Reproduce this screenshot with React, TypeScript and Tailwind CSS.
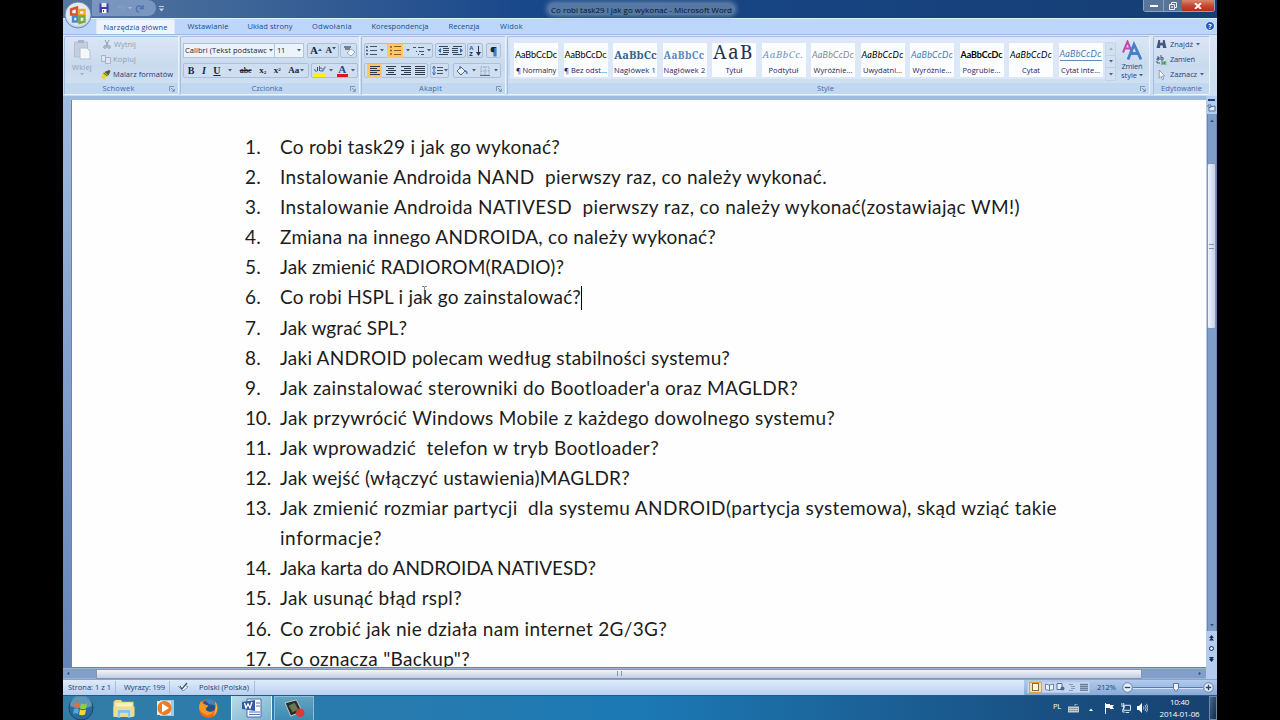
import { ReactNode, useLayoutEffect, useRef, useState } from "react";
import clsx from "clsx";

const questions: { text: string; width: number }[][] = [
  [{ text: "Co robi task29 i jak go wykonać?", width: 280 }],
  [{ text: "Instalowanie Androida NAND  pierwszy raz, co należy wykonać.", width: 547 }],
  [{ text: "Instalowanie Androida NATIVESD  pierwszy raz, co należy wykonać(zostawiając WM!)", width: 740 }],
  [{ text: "Zmiana na innego ANDROIDA, co należy wykonać?", width: 436 }],
  [{ text: "Jak zmienić RADIOROM(RADIO)?", width: 284 }],
  [{ text: "Co robi HSPL i jak go zainstalować?", width: 301 }],
  [{ text: "Jak wgrać SPL?", width: 127 }],
  [{ text: "Jaki ANDROID polecam według stabilności systemu?", width: 450 }],
  [{ text: "Jak zainstalować sterowniki do Bootloader'a oraz MAGLDR?", width: 518 }],
  [{ text: "Jak przywrócić Windows Mobile z każdego dowolnego systemu?", width: 555 }],
  [{ text: "Jak wprowadzić  telefon w tryb Bootloader?", width: 379 }],
  [{ text: "Jak wejść (włączyć ustawienia)MAGLDR?", width: 350 }],
  [
    { text: "Jak zmienić rozmiar partycji  dla systemu ANDROID(partycja systemowa), skąd wziąć takie", width: 777 },
    { text: "informacje?", width: 102 },
  ],
  [{ text: "Jaka karta do ANDROIDA NATIVESD?", width: 316 }],
  [{ text: "Jak usunąć błąd rspl?", width: 182 }],
  [{ text: "Co zrobić jak nie działa nam internet 2G/3G?", width: 387 }],
  [{ text: 'Co oznacza "Backup"?', width: 190 }],
];

const tabs = [
  { label: "Wstawianie", width: 41, box: "w-[62px]" },
  { label: "Układ strony", width: 45, box: "w-[62px]" },
  { label: "Odwołania", width: 40, box: "w-[62px]" },
  { label: "Korespondencja", width: 57, box: "w-[74px]" },
  { label: "Recenzja", width: 31, box: "w-[54px]" },
  { label: "Widok", width: 23, box: "w-[41px]" },
];

const calibri = "font-['Lato'] text-[9px]";
const cambria = "font-['Noto_Serif','DejaVu_Serif',serif]";

const wordStyles = [
  { sample: "AaBbCcDc", label: "¶ Normalny", sw: 42, lw: 40, cls: `${calibri} text-black` },
  { sample: "AaBbCcDc", label: "¶ Bez odst...", sw: 42, lw: 43, cls: `${calibri} text-black` },
  { sample: "AaBbCc", label: "Nagłówek 1", sw: 43, lw: 42, cls: `${cambria} font-bold text-[11px] text-[#35608f]` },
  { sample: "AaBbCc", label: "Nagłówek 2", sw: 41, lw: 42, cls: `${cambria} font-bold text-[10px] text-[#5787bd]` },
  { sample: "AaB", label: "Tytuł", sw: 41, lw: 17, cls: `${cambria} text-[19px] text-[#22344e]` },
  { sample: "AaBbCc.", label: "Podtytuł", sw: 41, lw: 30, cls: `${cambria} italic text-[9.5px] text-[#7394b9]` },
  { sample: "AaBbCcDc", label: "Wyróżnie...", sw: 42, lw: 39, cls: `${calibri} italic text-[#85888c]` },
  { sample: "AaBbCcDc", label: "Uwydatni...", sw: 42, lw: 39, cls: `${calibri} italic text-black` },
  { sample: "AaBbCcDc", label: "Wyróżnie...", sw: 42, lw: 39, cls: `${calibri} italic text-[#4878b4]` },
  { sample: "AaBbCcDc", label: "Pogrubie...", sw: 42, lw: 38, cls: `${calibri} font-bold text-black` },
  { sample: "AaBbCcDc", label: "Cytat", sw: 42, lw: 18, cls: `${calibri} italic text-black` },
  { sample: "AaBbCcDc", label: "Cytat inte...", sw: 42, lw: 39, cls: `${calibri} italic text-[#4878b4] border-b border-[#6688bb]` },
];

// Spreads the letters so that the text takes exactly `width` pixels
function Fit({ width, className, children }: { width: number; className?: string; children: string }) {
  const ref = useRef<HTMLSpanElement>(null);
  const [spacing, setSpacing] = useState(0);

  useLayoutEffect(() => {
    if (!ref.current) return;
    const natural = ref.current.getBoundingClientRect().width;
    setSpacing((width - natural) / children.length);
  }, [width, children]);

  return (
    <span ref={ref} className={clsx("inline-block whitespace-pre shrink-0", className)} style={{ letterSpacing: spacing }}>
      {children}
    </span>
  );
}

function Arrow({ className }: { className?: string }) {
  return (
    <svg viewBox="0 0 4 3" className={clsx("w-[4px] h-[3px] shrink-0", className ?? "text-[#47608a]")}>
      <path d="M0 0h4L2 2.6z" fill="currentColor" />
    </svg>
  );
}

function Launcher() {
  return (
    <svg viewBox="0 0 6 6" className="w-[6px] h-[6px] shrink-0" fill="none" stroke="#6b88b0">
      <path d="M.5 5V.5H5" strokeWidth=".8" />
      <path d="M2 2l3 3M5.300 2.800v2.500H2.800" strokeWidth=".9" />
    </svg>
  );
}

function Group({ title, width, className, launcher, children }: {
  title: string;
  width: number;
  className: string;
  launcher?: boolean;
  children: ReactNode;
}) {
  return (
    <section
      className={clsx(
        "flex h-[59px] shrink-0 flex-col rounded-[2px] border border-[#a3c0df] border-r-[#e9f3fd] border-b-[#e5f7fd] bg-linear-to-b from-[#dce6f4] via-[#c9daee] to-[#d3e3f5]",
        className,
      )}
    >
      <div className="h-[46px]">{children}</div>
      <div className="flex h-[11px] items-center bg-[#c1d8f0] px-[3px] text-[#3e6aaa]">
        <span className="flex flex-1 justify-center">
          <Fit width={width}>{title}</Fit>
        </span>
        {launcher && <Launcher />}
      </div>
    </section>
  );
}

function Bar({ className, children }: { className: string; children: ReactNode }) {
  return (
    <div className={clsx("flex h-[15px] items-center justify-around rounded-[2px] border border-[#a9c0dd] bg-[#cfdff1]", className)}>
      {children}
    </div>
  );
}

function Lines({ align }: { align: "left" | "center" | "right" | "full" }) {
  const d = {
    left: "M0 .5h10M0 2.500h7M0 4.500h10M0 6.500h7M0 8.500h10",
    center: "M0 .5h10M2 2.500h6M0 4.500h10M2 6.500h6M0 8.500h10",
    right: "M0 .5h10M3 2.500h7M0 4.500h10M3 6.500h7M0 8.500h10",
    full: "M0 .5h10M0 2.500h10M0 4.500h10M0 6.500h10M0 8.500h10",
  }[align];
  return (
    <svg viewBox="0 0 10 9" className="w-[10px] h-[9px]">
      <path d={d} stroke="#2f3b4d" strokeWidth="1.200" />
    </svg>
  );
}

function OfficeButton() {
  return (
    <svg viewBox="0 0 28 28" className="absolute left-[1px] top-[1px] z-10 h-[28px] w-[28px]">
      <defs>
        <radialGradient id="orb" cx=".5" cy=".45" r=".58">
          <stop offset="0" stopColor="#fbfcfd" />
          <stop offset=".75" stopColor="#dfe5ee" />
          <stop offset="1" stopColor="#9db1cb" />
        </radialGradient>
      </defs>
      <circle cx="14" cy="14" r="13" fill="url(#orb)" stroke="#5f7da8" strokeWidth=".8" />
      <g fill="none" strokeWidth="2.400">
        <path d="M7 8.500l6-2v7H7z" stroke="#d9532c" />
        <path d="M15 9h5.500v5H15z" stroke="#eda926" />
        <path d="M9 15.500h4.500v5H9z" stroke="#4c85d0" />
        <path d="M15.500 15.500h5v5l-5 1.500z" stroke="#78ac3f" />
      </g>
    </svg>
  );
}

function TitleBar() {
  return (
    <header className="relative flex h-[18px] items-start bg-linear-to-r from-[#55779f] via-[#18478a] via-40% to-[#153e73]">
      <div className="ml-[29px] flex h-[16px] w-[64px] items-center rounded-r-full bg-[#7896bf] pl-[7px]">
        <svg viewBox="0 0 10 10" className="h-[10px] w-[10px]">
          <path d="M.5.5h9v9h-9z" fill="#413ba5" />
          <path d="M2.500 0h5v4h-5z" fill="#e2e9f7" />
          <path d="M3 6h4.500v4H3z" fill="#fff" />
          <path d="M4 7h1v2H4z" fill="#413ba5" />
        </svg>
        <svg viewBox="0 0 10 10" className="ml-[8px] h-[8px] w-[9px]" fill="none" stroke="#839fc6" strokeWidth="1.500">
          <path d="M1 1v4h4M1.500 4.500C4 1 8 2 8 5s-2 4-3 4" />
        </svg>
        <Arrow className="ml-[2px] text-[#a4bad9]" />
        <svg viewBox="0 0 10 10" className="ml-[3px] h-[9px] w-[9px]" fill="none" stroke="#4a70b9" strokeWidth="1.500">
          <path d="M9 1v4H5M8.500 4.500C6 1 1.500 2 1.500 5s2 4 3 4" />
        </svg>
      </div>
      <svg viewBox="0 0 5 6" className="ml-[3px] mt-[6px] h-[6px] w-[5px]" fill="#bdd0ea">
        <path d="M0 0h5v1H0zM0 2.500h5L2.500 5.500z" />
      </svg>
      <div className="absolute left-[485px] top-[3px] flex h-[12px] items-center rounded-full bg-[#7f9bb9]/60 px-[3px] text-[8px] text-[#08121f] shadow-[0_0_4px_2px_rgba(127,155,185,0.6)]">
        <Fit width={181}>Co robi task29 i jak go wykonać - Microsoft Word</Fit>
      </div>
      <div className="absolute right-[2px] top-0 flex h-[12px] overflow-hidden rounded-b-[3px] border border-t-0 border-[#bccbdf]/70">
        <span className="flex w-[20px] items-end justify-center border-r border-[#8ba1bf] bg-[#577599] pb-[4px]">
          <i className="h-[2px] w-[8px] bg-white" />
        </span>
        <span className="flex w-[18px] items-center justify-center bg-[#577599]">
          <svg viewBox="0 0 8 8" className="h-[8px] w-[8px]" fill="none" stroke="#edf1f5">
            <path d="M2.500 2V.5h5v5H6M.5 2.500h5v5h-5zM2.500 4.500h1v1h-1z" />
          </svg>
        </span>
        <span className="flex w-[32px] items-center justify-center bg-linear-to-b from-[#dd8470] via-[#c54934] to-[#b72b1b]">
          <svg viewBox="0 0 8 6" className="h-[6px] w-[8px]" stroke="#fff" strokeWidth="1.800">
            <path d="M1 0l6 6M7 0L1 6" />
          </svg>
        </span>
      </div>
    </header>
  );
}

function TabRow() {
  return (
    <nav className="flex h-[16px] items-end border-t border-[#e1effd] bg-[#bdd7fb] pl-[33px] text-[#214a8c]">
      <span className="flex h-[15px] w-[79px] items-center justify-center rounded-t-[2px] border border-b-0 border-[#dce9f7] bg-[#edf4fd]">
        <Fit width={64}>Narzędzia główne</Fit>
      </span>
      <div className="ml-[2px] flex h-[15px] items-center">
        {tabs.map((tab) => (
          <span key={tab.label} className={clsx("flex justify-center", tab.box)}>
            <Fit width={tab.width}>{tab.label}</Fit>
          </span>
        ))}
      </div>
      <span className="mb-[3px] ml-auto mr-[2px] flex h-[10px] w-[10px] items-center justify-center rounded-full border border-[#dcecff] bg-[#285bb5] text-[7px] font-bold text-white">
        ?
      </span>
    </nav>
  );
}

function Clipboard() {
  return (
    <Group title="Schowek" width={32} className="w-[115px]" launcher>
      <div className="flex h-full text-[#929fb2]">
        <div className="flex w-[34px] flex-col items-center pt-[2px]">
          <svg viewBox="0 0 18 21" className="h-[21px] w-[18px]">
            <path d="M1.500 3h13v15h-13z" fill="#c3cfdf" stroke="#b1bfd2" />
            <path d="M5 1h6v3H5z" fill="#a7b4c7" />
            <path d="M7 9h7l3 3v8H7z" fill="#f4f7fa" stroke="#b1bfd2" />
          </svg>
          <Fit width={20} className="mt-[2px]">Wklej</Fit>
          <Arrow className="text-[#a5b1c2]" />
        </div>
        <div className="flex flex-col">
          <span className="flex h-[15px] items-center gap-[3px] pl-[4px]">
            <svg viewBox="0 0 8 9" className="h-[9px] w-[8px]" fill="none" stroke="#909eb4">
              <path d="M2 0l3 6M6 0L3 6" />
              <circle cx="2" cy="7" r="1.300" />
              <circle cx="6" cy="7" r="1.300" />
            </svg>
            <Fit width={22}>Wytnij</Fit>
          </span>
          <span className="flex h-[15px] items-center gap-[2px] pl-[2px]">
            <svg viewBox="0 0 10 9" className="h-[9px] w-[10px]" fill="#dde5ef" stroke="#9aa9bd" strokeWidth=".8">
              <path d="M.5.5h4v6h-4zM4.500 2.500h5v6h-5z" />
            </svg>
            <Fit width={23}>Kopiuj</Fit>
          </span>
          <span className="flex h-[15px] items-center gap-[2px] pl-[2px] text-[#1e3a72]">
            <svg viewBox="0 0 10 10" className="h-[10px] w-[10px]">
              <path d="M0 7l3-5 4 3-4 5z" fill="#f0d43c" />
              <path d="M3.500 2l4 3.500L9.500 1 8 0z" fill="#565b37" />
              <path d="M2.500 3l4 3" stroke="#5d8b32" strokeWidth="1.300" />
            </svg>
            <Fit width={60}>Malarz formatów</Fit>
          </span>
        </div>
      </div>
    </Group>
  );
}

function FontGroup() {
  return (
    <Group title="Czcionka" width={31} className="ml-[1px] w-[180px]" launcher>
      <div className="flex flex-col gap-[5px] pl-[2px] pt-[6px] text-[#1b2536]">
        <div className="flex h-[15px]">
          <span className="flex w-[92px] items-center justify-between border border-[#adc4de] bg-[#edf3fb] px-[1px] text-[7.500px]">
            <Fit width={82}>Calibri (Tekst podstawc</Fit>
            <Arrow />
          </span>
          <span className="flex w-[29px] items-center justify-between border border-l-0 border-[#adc4de] bg-[#edf3fb] px-[2px] text-[7.500px]">
            <Fit width={8}>11</Fit>
            <Arrow />
          </span>
          <Bar className="ml-[3px] w-[32px] font-['Liberation_Serif'] text-[11px] font-bold">
            <span className="flex">A<Arrow className="mt-[3px] rotate-180 text-[#304f91]" /></span>
            <span className="flex text-[9px]">A<Arrow className="mt-[2px] text-[#304f91]" /></span>
          </Bar>
          <Bar className="ml-[1px] w-[17px]">
            <svg viewBox="0 0 12 12" className="h-[12px] w-[12px]">
              <path d="M1 2h7M2 4h5" stroke="#586473" strokeWidth="1.300" />
              <path d="M4 8l4-4 4 3-4 4z" fill="#fff" stroke="#8595ac" strokeWidth=".8" />
            </svg>
          </Bar>
        </div>
        <div className="flex">
          <Bar className="w-[126px] font-['Liberation_Serif'] text-[9px] font-bold">
            <b className="text-[10px]">B</b>
            <i className="text-[10px]">I</i>
            <u className="text-[10px]">U</u>
            <Arrow />
            <s className="text-[8px]">abc</s>
            <span>x<sub className="text-[5px]">2</sub></span>
            <span>x<sup className="text-[5px]">2</sup></span>
            <span className="flex items-center gap-[1px]">Aa<Arrow /></span>
          </Bar>
          <Bar className="ml-[2px] w-[47px]">
            <svg viewBox="0 0 12 12" className="h-[12px] w-[12px]">
              <path d="M1 4a1.500 1.500 0 1 0 2.500 0V2v4M5.500 1v5M5.500 4a1.500 1.500 0 1 1 0 1" fill="none" stroke="#33445e" strokeWidth=".8" />
              <path d="M7 6l4-5 1 1-3 5z" fill="#7590b7" />
              <path d="M0 9h12v3H0z" fill="#f6f21c" />
            </svg>
            <Arrow />
            <span className="flex h-[13px] w-[11px] items-center justify-center border-b-[3px] border-[#da1420] font-['Liberation_Serif'] text-[11px] font-bold leading-none text-[#2b487f]">
              A
            </span>
            <Arrow />
          </Bar>
        </div>
      </div>
    </Group>
  );
}

function BulletIcon({ stroke }: { stroke: string }) {
  return (
    <svg viewBox="0 0 11 9" className="h-[9px] w-[11px]" stroke={stroke}>
      <path d="M0 1h2M0 4.500h2M0 8h2" strokeWidth="1.600" />
      <path d="M4 .5h7M4 4.500h7M4 8.500h7" strokeWidth="1" />
    </svg>
  );
}

function IndentIcon({ flip }: { flip?: boolean }) {
  return (
    <svg viewBox="0 0 11 9" className={clsx("h-[9px] w-[11px]", flip && "-scale-x-100")} stroke="#33435b">
      <path d="M1 .5h9M5 2.500h6M5 4.500h6M5 6.500h6M1 8.500h9" />
      <path d="M0 4.500L3 2v5z" fill="#3766b0" stroke="none" />
    </svg>
  );
}

function ParagraphGroup() {
  return (
    <Group title="Akapit" width={23} className="ml-[1px] w-[145px]" launcher>
      <div className="flex flex-col gap-[5px] pl-[2px] pt-[6px] text-[#1b2536]">
        <div className="flex">
          <Bar className="w-[69px]">
            <BulletIcon stroke="#42526a" />
            <Arrow />
            <span className="flex h-[14px] w-[16px] items-center justify-center bg-[#fcc866]">
              <BulletIcon stroke="#925c19" />
            </span>
            <Arrow />
            <svg viewBox="0 0 11 10" className="h-[10px] w-[11px]" stroke="#42526a">
              <path d="M0 1.500h3M5 1.500h6M3 5.500h1M6 5.500h5M5 8.500h1M8 8.500h3" />
            </svg>
            <Arrow />
          </Bar>
          <Bar className="ml-[2px] w-[31px]">
            <IndentIcon />
            <IndentIcon flip />
          </Bar>
          <Bar className="ml-[1px] w-[16px]">
            <span className="flex flex-col text-[6px] font-bold leading-[6px]">
              <span className="text-[#3a5a94]">A</span>
              <span>Z</span>
            </span>
            <svg viewBox="0 0 5 10" className="h-[10px] w-[5px]">
              <path d="M2.500 0v8" stroke="#25344a" />
              <path d="M0 6h5L2.500 10z" fill="#25344a" />
            </svg>
          </Bar>
          <Bar className="ml-[3px] w-[15px] text-[11px] font-bold">¶</Bar>
        </div>
        <div className="flex">
          <Bar className="w-[64px]">
            <span className="flex h-[14px] w-[15px] items-center justify-center bg-[#fcc866]">
              <Lines align="left" />
            </span>
            <Lines align="center" />
            <Lines align="right" />
            <Lines align="full" />
          </Bar>
          <Bar className="ml-[2px] w-[19px]">
            <svg viewBox="0 0 11 11" className="h-[11px] w-[11px]">
              <path d="M2 2v7M.5 3.500L2 1l1.500 2.500M.5 7.500L2 10l1.500-2.500" fill="none" stroke="#3e68b5" />
              <path d="M5 2.500h6M5 5.500h6M5 8.500h6" stroke="#44536a" />
            </svg>
            <Arrow />
          </Bar>
          <Bar className="ml-[4px] w-[48px]">
            <svg viewBox="0 0 12 11" className="h-[11px] w-[12px]">
              <path d="M1 6l4-4 4 4-4 4z" fill="#e9f0f8" stroke="#566983" />
              <path d="M4 4V1M9 6c2 0 2 2 2 3" fill="none" stroke="#4872bd" strokeWidth="1.300" />
            </svg>
            <Arrow />
            <svg viewBox="0 0 11 11" className="h-[10px] w-[10px]" fill="none" stroke="#7d90ac" strokeWidth=".8">
              <path d="M1 1h9v9H1zM5.500 1v9M1 5.500h9" strokeDasharray="1.500 1" />
              <path d="M0 10.500h11" stroke="#33435c" />
            </svg>
            <Arrow />
          </Bar>
        </div>
      </div>
    </Group>
  );
}

function StylesGroup() {
  return (
    <Group title="Style" width={17} className="ml-[1px] w-[643px]" launcher>
      <div className="flex h-full pl-[2px] pt-[2px]">
        <div className="flex h-[40px] gap-[5.500px] bg-[#dce7f7] pl-[4px] pt-[4px]">
          {wordStyles.map((style, index) => (
            <div key={index} className="flex h-[34px] w-[44px] flex-col bg-[#fcfdff]">
              <div className="flex h-[21px] w-[44px] items-center pl-[1px] pt-[2px]">
                <Fit
                  width={style.sw}
                  className={clsx(style.label === "Tytuł" ? "mt-[-6px] leading-[22px]" : "leading-[12px]", style.cls)}
                >
                  {style.sample}
                </Fit>
              </div>
              <div className="flex h-[12px] items-center justify-center text-[#28215c]">
                <Fit width={style.lw}>{style.label}</Fit>
              </div>
            </div>
          ))}
          <div className="ml-[-2px] flex h-[37px] w-[9px] flex-col gap-px">
            {[0, 1, 2].map((n) => (
              <span key={n} className="flex flex-1 items-center justify-center bg-[#d2e0f2] shadow-[0_0_0_0.500px_#b4c8e2]">
                <Arrow className={n === 0 ? "rotate-180 text-[#9dabc1]" : "text-[#46618f]"} />
              </span>
            ))}
          </div>
        </div>
        <div className="ml-[5px] flex w-[24px] flex-col items-center text-[#25477f]">
          <svg viewBox="0 0 20 20" className="mt-[1px] h-[21px] w-[20px]" fill="none">
            <path d="M1 12L5.500 1 10 12M3 8h5" stroke="#c04aae" strokeWidth="2" />
            <path d="M6 19l6-15 7 15M9 13h7" stroke="#477fc9" strokeWidth="2.800" />
          </svg>
          <Fit width={21} className="mt-[1px] leading-[9px]">Zmień</Fit>
          <span className="flex items-center gap-[2px] leading-[9px]">
            <Fit width={16}>style</Fit>
            <Arrow />
          </span>
        </div>
      </div>
    </Group>
  );
}

function EditingGroup() {
  return (
    <Group title="Edytowanie" width={41} className="ml-[3px] w-[57px]">
      <div className="flex flex-col pl-[2px] text-[#25477f]">
        <span className="flex h-[15px] items-center gap-[3px]">
          <svg viewBox="0 0 11 10" className="h-[9px] w-[11px]" fill="#40567e">
            <path d="M2 0h2v3h3V0h2l2 9H7V6H4v3H0z" />
          </svg>
          <Fit width={23}>Znajdź</Fit>
          <Arrow />
        </span>
        <span className="flex h-[15px] items-center gap-[3px]">
          <svg viewBox="0 0 11 10" className="h-[10px] w-[11px]" fill="none">
            <path d="M1 2h2v3H1V3.500h2M5 0v5h2V2.500H5M1 6v2h3" stroke="#46597b" />
            <path d="M5 7h2v2H5M10.500 7H8.500v2h2" stroke="#3f943a" strokeWidth="1.200" />
          </svg>
          <Fit width={25}>Zamień</Fit>
        </span>
        <span className="flex h-[15px] items-center gap-[3px]">
          <svg viewBox="0 0 11 11" className="h-[10px] w-[11px]">
            <path d="M3 0v9l2-2 1.500 3.500L8 10 6.500 6.500H9z" fill="#fff" stroke="#7184a3" strokeWidth=".8" />
          </svg>
          <Fit width={27}>Zaznacz</Fit>
          <Arrow />
        </span>
      </div>
    </Group>
  );
}

function Document() {
  return (
    <main className="flex h-[572px] bg-linear-to-b from-[#9fbbe0] to-[#6384b8]">
      <article className="relative ml-[8px] mt-[4px] h-[567px] w-[1135px] overflow-hidden border-l border-[#70829f] bg-[#fefefe] pl-[173px] pt-[32px] font-['Lato'] text-[19px] leading-[30.100px] text-[#1c1c1c]">
        <ol>
          {questions.map((lines, index) => (
            <li key={index} className="flex">
              <span className="w-[35px]">
                <Fit width={index < 9 ? 16 : 26}>{`${index + 1}.`}</Fit>
              </span>
              <div className="flex flex-col items-start">
                {lines.map((line) => (
                  <span key={line.text} className="flex items-center">
                    <Fit width={line.width}>{line.text}</Fit>
                    {index === 5 && <i className="h-[24px] w-px bg-black" />}
                  </span>
                ))}
              </div>
            </li>
          ))}
        </ol>
        <svg viewBox="0 0 7 14" className="absolute left-[349px] top-[186px] h-[14px] w-[7px]" fill="none" stroke="#666" strokeWidth=".8">
          <path d="M1 .5h2l.5.5.5-.5h2M3.500 1v12M1 13.500h2l.5-.5.5.5h2" />
        </svg>
      </article>
      <aside className="flex w-[11px] flex-col items-center bg-[#b4cdef] pt-[3px]">
        <i className="h-[2px] w-[7px] bg-[#24456f]" />
        <svg viewBox="0 0 9 9" className="mb-[2px] mt-[2px] h-[9px] w-[9px]" fill="#e4edf8" stroke="#53719d">
          <path d="M1 2h3v2H1zM3 4l5-1v5H2V5z" />
        </svg>
        <div className="flex h-[517px] w-[10px] flex-col items-center border-x border-[#6687b2] bg-[#7f9dc9]">
          <Arrow className="my-[5px] rotate-180 text-[#2e527f]" />
          <div className="mt-[36px] flex h-[166px] w-[9px] items-center justify-center rounded-[2px] border border-[#8196bd] bg-linear-to-r from-[#f0f4fc] to-[#c8d2e7]">
            <i className="h-[5px] w-[5px] border-y border-[#8794aa]" />
          </div>
          <Arrow className="mb-[4px] mt-auto text-[#2e527f]" />
        </div>
        <svg viewBox="0 0 7 30" className="mt-[1px] h-[30px] w-[7px]" fill="#162b51">
          <path d="M3.500 3L6 6H1zM3.500 5.500L6 8.500H1z" />
          <circle cx="3.500" cy="16.500" r="2" fill="#dce8f6" stroke="#162b51" />
          <path d="M1 25h5L3.500 28zM1 27h5L3.500 30z" />
        </svg>
      </aside>
    </main>
  );
}

function StatusBar() {
  return (
    <footer className="flex h-[16px] items-center border-t border-[#87a4cd] bg-linear-to-b from-[#e0ebfa] to-[#b8d0f0] pb-[1px] text-[#233e70]">
      <span className="flex h-[13px] w-[53px] items-center border-r border-[#a8bddc] pl-[5px]">
        <Fit width={43}>Strona: 1 z 1</Fit>
      </span>
      <span className="flex h-[13px] w-[54px] items-center border-r border-[#a8bddc] pl-[8px]">
        <Fit width={41}>Wyrazy: 199</Fit>
      </span>
      <svg viewBox="0 0 12 10" className="ml-[7px] h-[10px] w-[12px]" fill="none">
        <path d="M1 4l5 5 5-4-2-1" fill="#f9fbfd" stroke="#7f91ad" />
        <path d="M3 4l2 3 5-6" stroke="#405372" strokeWidth="1.300" />
      </svg>
      <span className="ml-[10px] flex h-[13px] w-[56px] items-center border-r border-[#a8bddc]">
        <Fit width={50}>Polski (Polska)</Fit>
      </span>
      <div className="ml-auto flex h-[15px] w-[193px] items-center bg-linear-to-b from-[#b2cbed] to-[#88aad8] pl-[3px]">
        <div className="flex h-[12px] w-[63px] items-center justify-around border border-[#b4c9e4] bg-[#c5d7ef]">
          <span className="flex h-[11px] w-[13px] items-center justify-center border border-[#e0a33a] bg-[#ffe09a]">
            <i className="h-[8px] w-[7px] border border-[#7e6a4f] bg-[#fff6df]" />
          </span>
          <svg viewBox="0 0 9 8" className="h-[8px] w-[9px]" fill="#e9f0f8" stroke="#5b6f91" strokeWidth=".8">
            <path d="M.5 1l4 1v5.500l-4-1zM8.500 1l-4 1v5.500l4-1z" />
          </svg>
          <svg viewBox="0 0 9 8" className="h-[8px] w-[9px]">
            <path d="M1 .5h5v6H1z" fill="#e9f0f8" stroke="#5b6f91" />
            <circle cx="6.500" cy="5.500" r="2" fill="#3e7292" />
          </svg>
          <svg viewBox="0 0 9 8" className="h-[8px] w-[9px]" stroke="#8599bb">
            <path d="M1 1.500h4M3 3.500h4M3 5.500h4M1 7.500h4" />
          </svg>
          <svg viewBox="0 0 8 8" className="h-[8px] w-[8px]" stroke="#6c7f9e">
            <path d="M0 1.500h8M0 3.500h8M0 5.500h8M0 7.500h8" strokeWidth="1.300" />
          </svg>
        </div>
        <Fit width={19} className="ml-[7px]">212%</Fit>
        <Zoom sign="M2.500 5h5" className="ml-[6px]" />
        <div className="relative flex flex-1 items-center">
          <i className="h-px w-full bg-[#5d79a6] shadow-[0_1px_0_#d5e4f7]" />
          <svg viewBox="0 0 6 9" className="absolute left-[40px] h-[9px] w-[6px]">
            <path d="M.5.5h5v5L3 8.500.5 5.500z" fill="#e9f1fb" stroke="#59749f" />
          </svg>
        </div>
        <Zoom sign="M2.500 5h5M5 2.500v5" className="mr-[3px]" />
      </div>
    </footer>
  );
}

function Zoom({ sign, className }: { sign: string; className: string }) {
  return (
    <svg viewBox="0 0 10 10" className={clsx("h-[11px] w-[11px] shrink-0", className)}>
      <circle cx="5" cy="5" r="4.300" fill="#e7f0fa" stroke="#60799f" strokeWidth=".8" />
      <path d={sign} stroke="#2e4467" strokeWidth="1.200" />
    </svg>
  );
}

function Taskbar() {
  return (
    <footer className="flex h-[25px] items-center overflow-hidden border-t border-[#2c5580] bg-linear-to-r from-[#327da6] via-[#1c79b4] via-50% to-[#17406f]">
      <svg viewBox="0 0 26 26" className="ml-[5px] h-[26px] w-[26px]">
        <circle cx="13" cy="13" r="12" fill="#2a6b9b" stroke="#1c4669" />
        <path d="M2 11a11 11 0 0 1 22 0c-7 3-15 3-22 0z" fill="#7fb3cd" opacity=".6" />
        <path d="M7 8c2-1 3.500-1 5 0l-1 5c-2-1-3.500-1-5 0z" fill="#ee6a32" />
        <path d="M13 8.500c2 1 3.500 1 6 0l-1 5c-2 1-4 1-6 0z" fill="#9acb43" />
        <path d="M6 14c2-1 3-1 5 0l-1 5c-2-1-3-1-5 0z" fill="#49a9e6" />
        <path d="M12 14.500c2 1 4 1 6 0l-1 5c-2 1-4 1-6 0z" fill="#fbd344" />
      </svg>
      <svg viewBox="0 0 24 22" className="ml-[18px] h-[21px] w-[24px]">
        <path d="M1 4l2-2h6l1 2h12v16H1z" fill="#ecd886" />
        <path d="M3 5h18v5H3z" fill="#f7efbd" />
        <path d="M1 9h22v10H1z" fill="#f1dc86" />
        <path d="M5 20v-6q0-2 2-2h10q2 0 2 2v6h-3v-4H8v4z" fill="#84c1e7" stroke="#c9e8f8" strokeWidth=".8" />
      </svg>
      <svg viewBox="0 0 20 18" className="ml-[20px] h-[18px] w-[20px]">
        <path d="M4 1h14v16H4z" fill="#9ccbe5" />
        <path d="M1 2h14v14H1z" fill="#dceaf2" />
        <circle cx="8.500" cy="9" r="7" fill="#ed7b20" />
        <path d="M6 4.500v9L13 9z" fill="#fff" />
      </svg>
      <svg viewBox="0 0 22 22" className="ml-[22px] h-[21px] w-[21px]">
        <circle cx="11" cy="11" r="10" fill="#e96b1b" />
        <circle cx="11.500" cy="8.500" r="7" fill="#25508f" />
        <path d="M8 2c5-2 10 1 10 6-2 0-3-2-5-1-2-1-4-2-5-5z" fill="#3e87c0" />
        <path d="M1 10C1 6 3 4 4 3c0 2 1 3 4 4l3 1-3 3c1 4 6 4 9 2-2 5-7 6-10 4S2 14 1 10z" fill="#f39725" />
        <path d="M18 4c4 5 2 12-2 15 2-4 3-9 2-15z" fill="#f8b72f" />
      </svg>
      <div className="ml-[12px] flex h-[25px] w-[41px] items-center justify-center border-x border-[#e0f3f9] bg-linear-to-br from-[#b9dce8] to-[#77b2cd]">
        <svg viewBox="0 0 21 20" className="h-[20px] w-[21px]">
          <path d="M6 1h14v18H6z" fill="#f7faff" stroke="#536ca7" />
          <path d="M15 5h4M15 8h4M8 14h11M8 16.500h11" stroke="#5874b2" />
          <path d="M1 4l13-2v11L1 11z" fill="#3558a4" />
          <path d="M3.500 5l1.500 5 2-4 2 4 2-6" fill="none" stroke="#fff" strokeWidth="1.300" />
        </svg>
      </div>
      <div className="ml-[2px] flex h-[25px] w-[40px] items-center justify-center border border-b-0 border-[#8bbdd4] bg-linear-to-b from-[#61a3c2] to-[#398ab3]">
        <svg viewBox="0 0 22 20" className="h-[19px] w-[21px]">
          <path d="M1 4l12-3 6 12-12 5z" fill="#292f2b" stroke="#c9cec5" />
          <path d="M5 7l6-3 4 7-6 3z" fill="#687a55" />
          <circle cx="17" cy="14.500" r="4.500" fill="#dd3831" />
        </svg>
      </div>
      <div className="ml-auto flex items-center text-white">
        <Fit width={8} className="mb-[3px]">PL</Fit>
        <svg viewBox="0 0 11 9" className="ml-[7px] h-[9px] w-[11px]">
          <path d="M7 2V0h3" fill="none" stroke="#c7cdd1" strokeWidth=".8" />
          <path d="M0 2.500h11v6H0z" fill="#c8cbc9" />
          <path d="M1 4.500h9M1 6.500h9" stroke="#646e77" strokeDasharray="1 .6" strokeWidth=".8" />
        </svg>
        <Arrow className="ml-[10px] mt-[3px] rotate-180 text-white" />
        <svg viewBox="0 0 10 11" className="ml-[11px] h-[11px] w-[10px]" fill="#fff">
          <path d="M1 0h1v11H1zM2 1h4v1h4L8.500 4 10 6H6V5H2z" />
        </svg>
        <svg viewBox="0 0 11 11" className="ml-[7px] h-[10px] w-[10px]" fill="none" stroke="#f2f7fb">
          <path d="M3 2.500h7.500V8H3zM5 10.500h4M1 0v3M3 0v3M.5 3.500h3v2L2 6.500V10h2" />
        </svg>
        <svg viewBox="0 0 11 10" className="ml-[6px] h-[10px] w-[11px]">
          <path d="M0 3h2l3-3v10L2 7H0z" fill="#fff" />
          <path d="M6.500 3.500q1 1.500 0 3M8 2q2.500 3 0 6M9.500.8q3 4 0 8.400" fill="none" stroke="#d5e4f1" strokeWidth=".8" />
        </svg>
        <div className="ml-[11px] flex w-[41px] flex-col items-center text-[8px] leading-[12px]">
          <Fit width={19}>10:40</Fit>
          <Fit width={40}>2014-01-06</Fit>
        </div>
        <i className="ml-[9px] h-[24px] w-[8px] border border-[#6d89a7] bg-linear-to-br from-[#436789] to-[#102c4e]" />
      </div>
    </footer>
  );
}

export default function App() {
  return (
    <div className="h-[720px] w-[1280px] overflow-hidden bg-black pl-[63px] font-['Open_Sans','Noto_Sans',sans-serif] text-[7.500px] leading-[11px]">
      <div className="relative w-[1154px]">
        <OfficeButton />
        <TitleBar />
        <TabRow />
        <div className="flex h-[62px] items-start border-t border-[#a1bbe0] bg-linear-to-b from-[#dbe5f4] to-[#c9dcf3] pl-[1px] pt-[1px]">
          <Clipboard />
          <FontGroup />
          <ParagraphGroup />
          <StylesGroup />
          <EditingGroup />
        </div>
        <Document />
        <div className="flex h-[11px] bg-[#b4cdef]">
          <div className="flex h-full w-[1143px] items-center border-y border-[#9bb3d3] bg-[#829fca]">
            <Arrow className="ml-[3px] rotate-90 text-[#2d5181]" />
            <div className="ml-[26px] flex h-[10px] w-[1046px] items-center justify-center border border-[#8297b7] bg-linear-to-b from-[#f2f5fb] to-[#c2cddf]">
              <i className="h-[5px] w-[5px] border-x border-[#8492a9]" />
            </div>
            <Arrow className="ml-auto mr-[4px] -rotate-90 text-[#2d5181]" />
          </div>
        </div>
        <StatusBar />
        <Taskbar />
      </div>
    </div>
  );
}
